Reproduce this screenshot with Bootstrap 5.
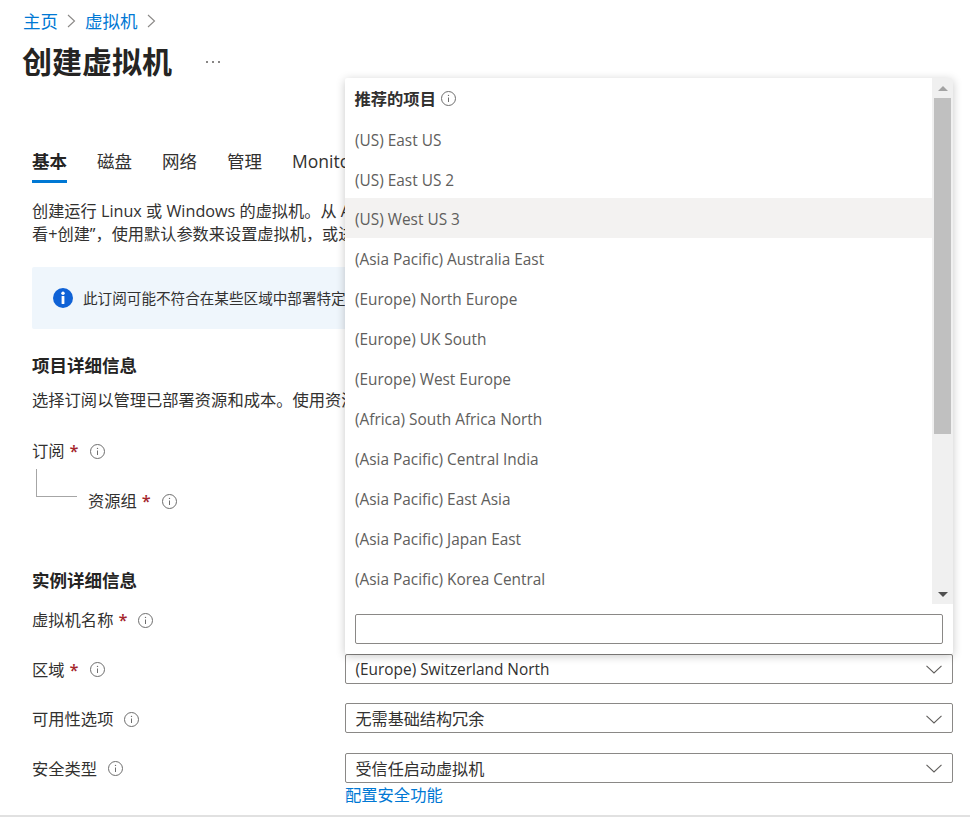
<!DOCTYPE html>
<html lang="zh-CN">
<head>
<meta charset="utf-8">
<title>创建虚拟机</title>
<link href="https://cdn.jsdelivr.net/npm/bootstrap@5.3.0/dist/css/bootstrap.min.css" rel="stylesheet">
<style>
html,body{height:100%;overflow:hidden}
body{font-family:"Open Sans","Noto Sans CJK SC",sans-serif;font-size:16.3px;line-height:24px;color:#323130;background:#fff}
.az-page{height:815px;overflow:hidden;padding:9px 17px 0 32px}
.az-foot{height:2px;background:#e1e1e1}
a{color:#0078d4;text-decoration:none}
.az-crumb{margin:0 0 0 -9px;height:24px;color:#0078d4;font-size:17.5px;gap:9px}
.az-title{margin:10px 0 0 -10px;height:38px;gap:33px}
.az-title h1{font-size:30px;line-height:38px;font-weight:700;margin:0;color:#252423}
.az-tabs{margin-top:68px;gap:30px;font-size:17.5px;white-space:nowrap;overflow:hidden;width:313px;flex-wrap:nowrap}
.az-tabs .nav-link{padding:0;height:34px;line-height:24px;color:#323130;border-bottom:3px solid transparent}
.az-tabs .nav-link.active{font-weight:700;border-bottom-color:#0078d4;color:#252423}
.az-desc{margin:17px 0 0;line-height:23px;font-size:16.2px;white-space:nowrap;overflow:hidden;width:313px}
.az-info{margin:21px 0 0;height:62px;padding:0 21px;background:#eff6fc;border:0;border-radius:2px 0 0 2px;gap:10px;white-space:nowrap;overflow:hidden;color:#323130;font-size:14.6px;width:313px}
.az-h{font-size:17.5px;font-weight:700;line-height:24px;margin:0;color:#252423}
.az-sub{margin:11px 0 0;white-space:nowrap;overflow:hidden;width:313px;font-size:16.3px}
.az-star{color:#a4262c;font-weight:600;margin-left:5px}
.az-label{height:24px}
.az-label svg{margin-left:11px}
.az-tree{width:41px;height:28px;margin-left:4px;border-left:1px solid #a6a6a6;border-bottom:1px solid #a6a6a6}
.az-row{height:30px;align-items:center}
.az-row + .az-row{margin-top:19.5px}
.az-col{width:313px;flex:none;padding-top:2px}
.az-sel{flex:1;height:30px;border:1px solid #8a8886;border-radius:2px;padding:2px 10px 0 9.5px;line-height:26px;background:#fff;font-size:16.1px}
.az-latin{font-size:15.4px}
.az-link{margin:0 0 0 313px;line-height:24px}
.az-pop{position:absolute;left:345px;top:78px;width:608px;height:576px;background:#fff;box-shadow:0 2px 10px rgba(0,0,0,.22);border-radius:2px;overflow:hidden;z-index:5}
.az-scrollarea{height:526px}
.az-head{height:41px;padding:0 9.5px;font-weight:600;color:#323130;gap:5px}
.az-list .list-group-item{height:40px;line-height:38px;padding:3px 10px 0;border:0;color:#605e5c;background:transparent;font-size:15.4px}
.az-list .list-group-item.active{background:#f3f2f1;color:#605e5c}
.az-bar{width:21px;flex:none;background:#f0f0f0;padding:0 2px}
.az-arrow{height:20px}
.az-thumb{height:336px;background:#c0c0c0}
.az-search{margin:10px 10px 0;height:30px;border:1px solid #8a8886;border-radius:2px;padding:0 8px;width:588px;display:block}
</style>
</head>
<body>
<div class="az-page">
  <nav class="d-flex align-items-center az-crumb">
    <a href="#">主页</a>
    <svg width="9" height="14" viewBox="0 0 9 14" fill="none" stroke="#8a8886" stroke-width="1.1"><path d="M1 1l6.5 6L1 13"/></svg>
    <a href="#">虚拟机</a>
    <svg width="9" height="14" viewBox="0 0 9 14" fill="none" stroke="#8a8886" stroke-width="1.1"><path d="M1 1l6.5 6L1 13"/></svg>
  </nav>
  <div class="d-flex align-items-center az-title">
    <h1>创建虚拟机</h1>
    <svg width="16" height="4" viewBox="0 0 16 4" fill="#605e5c"><circle cx="2" cy="2" r="1"/><circle cx="8" cy="2" r="1"/><circle cx="14" cy="2" r="1"/></svg>
  </div>
  <ul class="nav az-tabs">
    <li class="nav-item"><a class="nav-link active" href="#">基本</a></li>
    <li class="nav-item"><a class="nav-link" href="#">磁盘</a></li>
    <li class="nav-item"><a class="nav-link" href="#">网络</a></li>
    <li class="nav-item"><a class="nav-link" href="#">管理</a></li>
    <li class="nav-item"><a class="nav-link" href="#">Monito</a></li>
  </ul>
  <p class="az-desc">创建运行 Linux 或 Windows 的虚拟机。从 A<br>看+创建”，使用默认参数来设置虚拟机，或进</p>
  <div class="alert d-flex align-items-center az-info">
    <svg width="20" height="20" viewBox="0 0 20 20" class="flex-shrink-0"><circle cx="10" cy="10" r="10" fill="#0f62d6"/><rect x="8.6" y="8" width="2.8" height="8" rx=".6" fill="#fff"/><circle cx="10" cy="5.3" r="1.7" fill="#fff"/></svg>
    <span>此订阅可能不符合在某些区域中部署特定</span>
  </div>
  <h2 class="az-h" style="margin-top:24px">项目详细信息</h2>
  <p class="az-sub">选择订阅以管理已部署资源和成本。使用资源</p>
  <div class="d-flex align-items-center az-label" style="margin-top:27px">
    <span>订阅</span><span class="az-star">*</span>
    <svg width="15" height="15" viewBox="0 0 15 15" fill="none"><circle cx="7.5" cy="7.5" r="7" stroke="#6e6e6e"/><path d="M7.5 6.5v4.5" stroke="#6e6e6e"/><circle cx="7.5" cy="4.4" r=".7" fill="#6e6e6e"/></svg>
  </div>
  <div class="d-flex" style="margin-top:6px">
    <div class="az-tree"></div>
    <div class="d-flex align-items-center az-label" style="margin:20px 0 0 11px">
      <span>资源组</span><span class="az-star">*</span>
      <svg width="15" height="15" viewBox="0 0 15 15" fill="none"><circle cx="7.5" cy="7.5" r="7" stroke="#6e6e6e"/><path d="M7.5 6.5v4.5" stroke="#6e6e6e"/><circle cx="7.5" cy="4.4" r=".7" fill="#6e6e6e"/></svg>
    </div>
  </div>
  <h2 class="az-h" style="margin-top:55px">实例详细信息</h2>
  <div style="margin-top:12px">
    <div class="d-flex az-row"><div class="az-col d-flex align-items-center az-label"><span>虚拟机名称</span><span class="az-star">*</span>
      <svg width="15" height="15" viewBox="0 0 15 15" fill="none"><circle cx="7.5" cy="7.5" r="7" stroke="#6e6e6e"/><path d="M7.5 6.5v4.5" stroke="#6e6e6e"/><circle cx="7.5" cy="4.4" r=".7" fill="#6e6e6e"/></svg></div>
      <div class="az-sel"></div></div>
    <div class="d-flex az-row"><div class="az-col d-flex align-items-center az-label"><span>区域</span><span class="az-star">*</span>
      <svg width="15" height="15" viewBox="0 0 15 15" fill="none"><circle cx="7.5" cy="7.5" r="7" stroke="#6e6e6e"/><path d="M7.5 6.5v4.5" stroke="#6e6e6e"/><circle cx="7.5" cy="4.4" r=".7" fill="#6e6e6e"/></svg></div>
      <div class="az-sel d-flex justify-content-between align-items-center"><span class="az-latin">(Europe) Switzerland North</span><svg width="16" height="9" viewBox="0 0 16 9" fill="none" stroke="#605e5c" stroke-width="1.1"><path d="M.5 .8L8 8l7.5-7.2"/></svg></div></div>
    <div class="d-flex az-row"><div class="az-col d-flex align-items-center az-label"><span>可用性选项</span>
      <svg width="15" height="15" viewBox="0 0 15 15" fill="none"><circle cx="7.5" cy="7.5" r="7" stroke="#6e6e6e"/><path d="M7.5 6.5v4.5" stroke="#6e6e6e"/><circle cx="7.5" cy="4.4" r=".7" fill="#6e6e6e"/></svg></div>
      <div class="az-sel d-flex justify-content-between align-items-center"><span>无需基础结构冗余</span><svg width="16" height="9" viewBox="0 0 16 9" fill="none" stroke="#605e5c" stroke-width="1.1"><path d="M.5 .8L8 8l7.5-7.2"/></svg></div></div>
    <div class="d-flex az-row"><div class="az-col d-flex align-items-center az-label"><span>安全类型</span>
      <svg width="15" height="15" viewBox="0 0 15 15" fill="none"><circle cx="7.5" cy="7.5" r="7" stroke="#6e6e6e"/><path d="M7.5 6.5v4.5" stroke="#6e6e6e"/><circle cx="7.5" cy="4.4" r=".7" fill="#6e6e6e"/></svg></div>
      <div class="az-sel d-flex justify-content-between align-items-center"><span>受信任启动虚拟机</span><svg width="16" height="9" viewBox="0 0 16 9" fill="none" stroke="#605e5c" stroke-width="1.1"><path d="M.5 .8L8 8l7.5-7.2"/></svg></div></div>
    <p class="az-link"><a href="#">配置安全功能</a></p>
  </div>
</div>
<div class="az-foot"></div>

<div class="az-pop">
  <div class="d-flex az-scrollarea">
    <div class="flex-grow-1">
      <div class="d-flex align-items-center az-head"><span>推荐的项目</span>
        <svg width="15" height="15" viewBox="0 0 15 15" fill="none"><circle cx="7.5" cy="7.5" r="7" stroke="#6e6e6e"/><path d="M7.5 6.5v4.5" stroke="#6e6e6e"/><circle cx="7.5" cy="4.4" r=".7" fill="#6e6e6e"/></svg>
      </div>
      <div class="list-group list-group-flush az-list">
        <div class="list-group-item">(US) East US</div>
        <div class="list-group-item">(US) East US 2</div>
        <div class="list-group-item active">(US) West US 3</div>
        <div class="list-group-item">(Asia Pacific) Australia East</div>
        <div class="list-group-item">(Europe) North Europe</div>
        <div class="list-group-item">(Europe) UK South</div>
        <div class="list-group-item">(Europe) West Europe</div>
        <div class="list-group-item">(Africa) South Africa North</div>
        <div class="list-group-item">(Asia Pacific) Central India</div>
        <div class="list-group-item">(Asia Pacific) East Asia</div>
        <div class="list-group-item">(Asia Pacific) Japan East</div>
        <div class="list-group-item">(Asia Pacific) Korea Central</div>
      </div>
    </div>
    <div class="az-bar d-flex flex-column">
      <div class="az-arrow d-flex align-items-center justify-content-center"><svg width="10" height="5" viewBox="0 0 10 5" fill="#a3a3a3"><path d="M0 5L5 0l5 5z"/></svg></div>
      <div class="az-thumb"></div>
      <div class="flex-grow-1"></div>
      <div class="az-arrow d-flex align-items-center justify-content-center"><svg width="10" height="5" viewBox="0 0 10 5" fill="#505050"><path d="M0 0l5 5 5-5z"/></svg></div>
    </div>
  </div>
  <input class="az-search" type="text" aria-label="搜索">
</div>
<script src="https://cdn.jsdelivr.net/npm/bootstrap@5.3.0/dist/js/bootstrap.bundle.min.js"></script>
</body>
</html>
